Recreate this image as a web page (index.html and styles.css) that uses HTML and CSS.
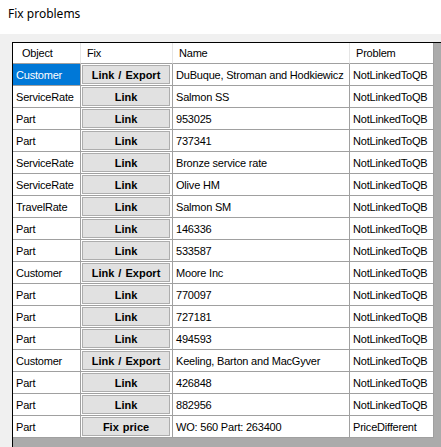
FILE: index.html
```html
<!DOCTYPE html>
<html lang="en">
<head>
  <meta charset="UTF-8" />
  <title>Fix problems</title>
  <link rel="stylesheet" href="styles.css">
</head>
<body>

<div class="title">Fix problems</div>

<div class="panel">
  <div class="grid">
    <table>
      <colgroup>
        <col class="c-object">
        <col class="c-fix">
        <col class="c-name">
        <col class="c-problem">
      </colgroup>
      <thead>
        <tr>
          <th class="h-object">Object</th>
          <th>Fix</th>
          <th>Name</th>
          <th>Problem</th>
        </tr>
      </thead>
      <tbody>
        <tr><td class="selected">Customer</td><td class="fix"><button>Link / Export</button></td><td>DuBuque, Stroman and Hodkiewicz</td><td>NotLinkedToQB</td></tr>
        <tr><td>ServiceRate</td><td class="fix"><button>Link</button></td><td>Salmon SS</td><td>NotLinkedToQB</td></tr>
        <tr><td>Part</td><td class="fix"><button>Link</button></td><td>953025</td><td>NotLinkedToQB</td></tr>
        <tr><td>Part</td><td class="fix"><button>Link</button></td><td>737341</td><td>NotLinkedToQB</td></tr>
        <tr><td>ServiceRate</td><td class="fix"><button>Link</button></td><td>Bronze service rate</td><td>NotLinkedToQB</td></tr>
        <tr><td>ServiceRate</td><td class="fix"><button>Link</button></td><td>Olive HM</td><td>NotLinkedToQB</td></tr>
        <tr><td>TravelRate</td><td class="fix"><button>Link</button></td><td>Salmon SM</td><td>NotLinkedToQB</td></tr>
        <tr><td>Part</td><td class="fix"><button>Link</button></td><td>146336</td><td>NotLinkedToQB</td></tr>
        <tr><td>Part</td><td class="fix"><button>Link</button></td><td>533587</td><td>NotLinkedToQB</td></tr>
        <tr><td>Customer</td><td class="fix"><button>Link / Export</button></td><td>Moore Inc</td><td>NotLinkedToQB</td></tr>
        <tr><td>Part</td><td class="fix"><button>Link</button></td><td>770097</td><td>NotLinkedToQB</td></tr>
        <tr><td>Part</td><td class="fix"><button>Link</button></td><td>727181</td><td>NotLinkedToQB</td></tr>
        <tr><td>Part</td><td class="fix"><button>Link</button></td><td>494593</td><td>NotLinkedToQB</td></tr>
        <tr><td>Customer</td><td class="fix"><button>Link / Export</button></td><td>Keeling, Barton and MacGyver</td><td>NotLinkedToQB</td></tr>
        <tr><td>Part</td><td class="fix"><button>Link</button></td><td>426848</td><td>NotLinkedToQB</td></tr>
        <tr><td>Part</td><td class="fix"><button>Link</button></td><td>882956</td><td>NotLinkedToQB</td></tr>
        <tr><td>Part</td><td class="fix"><button>Fix price</button></td><td>WO: 560 Part: 263400</td><td>PriceDifferent</td></tr>
      </tbody>
    </table>
  </div>
</div>

</body>
</html>
```

FILE: styles.css
```css
* {
  margin: 0;
  padding: 0;
  box-sizing: border-box;
}

html,
body {
  height: 100%;
  overflow: hidden;
}

body {
  background: #f0f0f0;
  font-family: 'Liberation Sans', Arial, sans-serif;
  font-size: 11px;
  color: #000;
}

/* Window title strip */
.title {
  height: 34px;
  background: #fff;
  padding: 6px 0 0 8px;
  font-family: 'Noto Sans', 'Open Sans', sans-serif;
  font-size: 12px;
  line-height: 16px;
}

.panel {
  padding: 8px 0 0 12px;
}

/* DataGridView */
.grid {
  height: 420px;
  background: #ababab;
  border-top: 1px solid #000;
  border-left: 1px solid #000;
}

table {
  border-collapse: separate;
  border-spacing: 0;
  table-layout: fixed;
  width: 421px;
}

.c-object { width: 68px; }
.c-fix { width: 92px; }
.c-name { width: 177px; }
.c-problem { width: 84px; }

th {
  height: 21px;
  background: #fff;
  font-weight: normal;
  text-align: left;
  letter-spacing: -0.2px;
  padding: 0 0 0 6px;
  border-right: 1px solid #e5e5e5;
  border-bottom: 1px solid #a0a0a0;
  white-space: nowrap;
}

th.h-object {
  padding-left: 9px;
}

th:last-child {
  border-right-color: #a0a0a0;
}

td {
  height: 22px;
  background: #fff;
  letter-spacing: -0.2px;
  padding: 0 0 0 3px;
  border-right: 1px solid #a0a0a0;
  border-bottom: 1px solid #a0a0a0;
  white-space: nowrap;
  overflow: hidden;
}

td.selected {
  background: #0078d7;
  color: #fff;
}

td.fix {
  padding: 1px 2px 1px 1px;
}

td.fix button {
  display: block;
  width: 100%;
  height: 19px;
  background: #e1e1e1;
  border: 1px solid #adadad;
  font-family: 'Liberation Sans', Arial, sans-serif;
  font-size: 11px;
  font-weight: bold;
  letter-spacing: 0;
  word-spacing: 1px;
  color: #000;
}
```
